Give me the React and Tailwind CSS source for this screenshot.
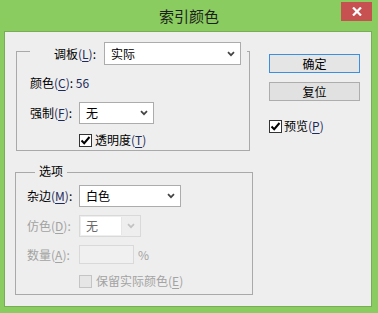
import React from "react";

const font = { fontFamily: '"Noto Sans CJK SC", "Noto Sans", sans-serif' };

function Chevron({ color = "#444" }) {
  return (
    <svg width="8" height="6" viewBox="0 0 8 6" className="shrink-0">
      <path d="M1 1.2 L4 4.2 L7 1.2" fill="none" stroke={color} strokeWidth="1.7" />
    </svg>
  );
}

function Select({ w, h = "h-[22px]", text }) {
  return (
    <div className={`${w} ${h} bg-white border border-[#acacac] flex items-center justify-between pl-[6px] pr-[5px] text-[12px] text-black`}>
      <span>{text}</span>
      <Chevron />
    </div>
  );
}

function Check({ checked, disabled }) {
  return (
    <div
      className={`w-[13px] h-[13px] border flex items-center justify-center shrink-0 ${
        disabled ? "border-[#c4c4c4] bg-[#e6e6e6]" : "border-[#333] bg-white"
      }`}
    >
      {checked && (
        <svg width="11" height="11" viewBox="0 0 11 11">
          <path d="M1.5 5.5 L4.2 8.2 L9.5 2" fill="none" stroke="#000" strokeWidth="2" />
        </svg>
      )}
    </div>
  );
}

function Key({ k, disabled }) {
  return (
    <span className={disabled ? "" : "text-[#1d2b5a]"}>
      (<span className="underline underline-offset-[2px]">{k}</span>)
    </span>
  );
}

export default function App() {
  return (
    <div className="w-[378px] h-[313px] bg-[#8acc5f] flex flex-col select-none" style={font}>
      <div className="relative h-[31px] shrink-0 flex items-center justify-center">
        <span className="text-[15px] text-[#1e1e1e] leading-none -mt-[1px]">索引颜色</span>
        <div className="absolute right-[6px] top-[2px] w-[31px] h-[19px] bg-[#c75050] flex items-center justify-center">
          <svg width="10" height="9" viewBox="0 0 10 9">
            <path d="M1 0.5 L9 8.5 M9 0.5 L1 8.5" stroke="#fff" strokeWidth="2.2" />
          </svg>
        </div>
      </div>
      <div className="ml-[4px] w-[368px] h-[276px] border border-[#78ad58] bg-[#eeeeee] flex text-[12px] leading-[16px] text-black">
        {/* left column */}
        <div className="w-[248px] flex flex-col">
          {/* group 1 */}
          <div className="ml-[11px] mt-[19px] w-[234px] h-[100px] border border-[#a9a9a9] flex flex-col">
            <div className="-mt-[10px] ml-[13px] w-[217px] h-[23px] bg-[#eeeeee] flex items-center">
              <div className="w-[74px] pr-[8px] text-right">
                调板<Key k="L" />:
              </div>
              <Select w="w-[137px]" h="h-[23px]" text="实际" />
            </div>
            <div className="mt-[10px] ml-[13px]">
              颜色<Key k="C" />: <span className="text-[#1d2b5a]">56</span>
            </div>
            <div className="mt-[11px] ml-[13px] flex items-center">
              <div className="w-[49px]">
                强制<Key k="F" />:
              </div>
              <Select w="w-[75px]" text="无" />
            </div>
            <div className="mt-[8px] ml-[62px] flex items-center gap-[3px]">
              <Check checked />
              <span>
                透明度<Key k="T" />
              </span>
            </div>
          </div>
          {/* group 2 */}
          <div className="ml-[10px] mt-[21px] w-[238px] h-[123px] border border-[#a9a9a9] flex flex-col">
            <div className="-mt-[10px] ml-[19px] self-start px-[4px] bg-[#eeeeee] h-[16px]">选项</div>
            <div className="mt-[6px] ml-[11px] flex items-center">
              <div className="w-[52px]">
                杂边<Key k="M" />:
              </div>
              <Select w="w-[102px]" text="白色" />
            </div>
            <div className="mt-[8px] ml-[11px] flex items-center text-[#a3a3a3]">
              <div className="w-[52px]">
                仿色<Key k="D" disabled />:
              </div>
              <div className="w-[62px] h-[22px] border border-[#d9d9d9] flex items-center">
                <div className="ml-[1px] w-[41px] h-[18px] bg-white border-r border-[#e6e6e6] pl-[5px] text-[#6a6a6a] flex items-center">
                  无
                </div>
                <div className="flex-1 flex justify-center">
                  <Chevron color="#c2c2c2" />
                </div>
              </div>
            </div>
            <div className="mt-[8px] ml-[11px] flex items-center text-[#a3a3a3]">
              <div className="w-[52px]">
                数量<Key k="A" disabled />:
              </div>
              <div className="w-[55px] h-[19px] border border-[#d9d9d9] bg-[#f0f0f0]" />
              <span className="ml-[4px]">%</span>
            </div>
            <div className="mt-[9px] ml-[63px] flex items-center gap-[4px] text-[#a3a3a3]">
              <Check disabled />
              <span>
                保留实际颜色<Key k="E" disabled />
              </span>
            </div>
          </div>
        </div>
        {/* right column */}
        <div className="ml-[16px] mt-[22px] flex flex-col">
          <div className="w-[91px] h-[19px] border border-[#3c8fe0] bg-[#e5e5e5] flex items-center justify-center">确定</div>
          <div className="mt-[9px] w-[91px] h-[19px] border border-[#adadad] bg-[#e1e1e1] flex items-center justify-center">复位</div>
          <div className="mt-[17px] flex items-center gap-[2px]">
            <Check checked />
            <span>
              预览<Key k="P" />
            </span>
          </div>
        </div>
      </div>
    </div>
  );
}
